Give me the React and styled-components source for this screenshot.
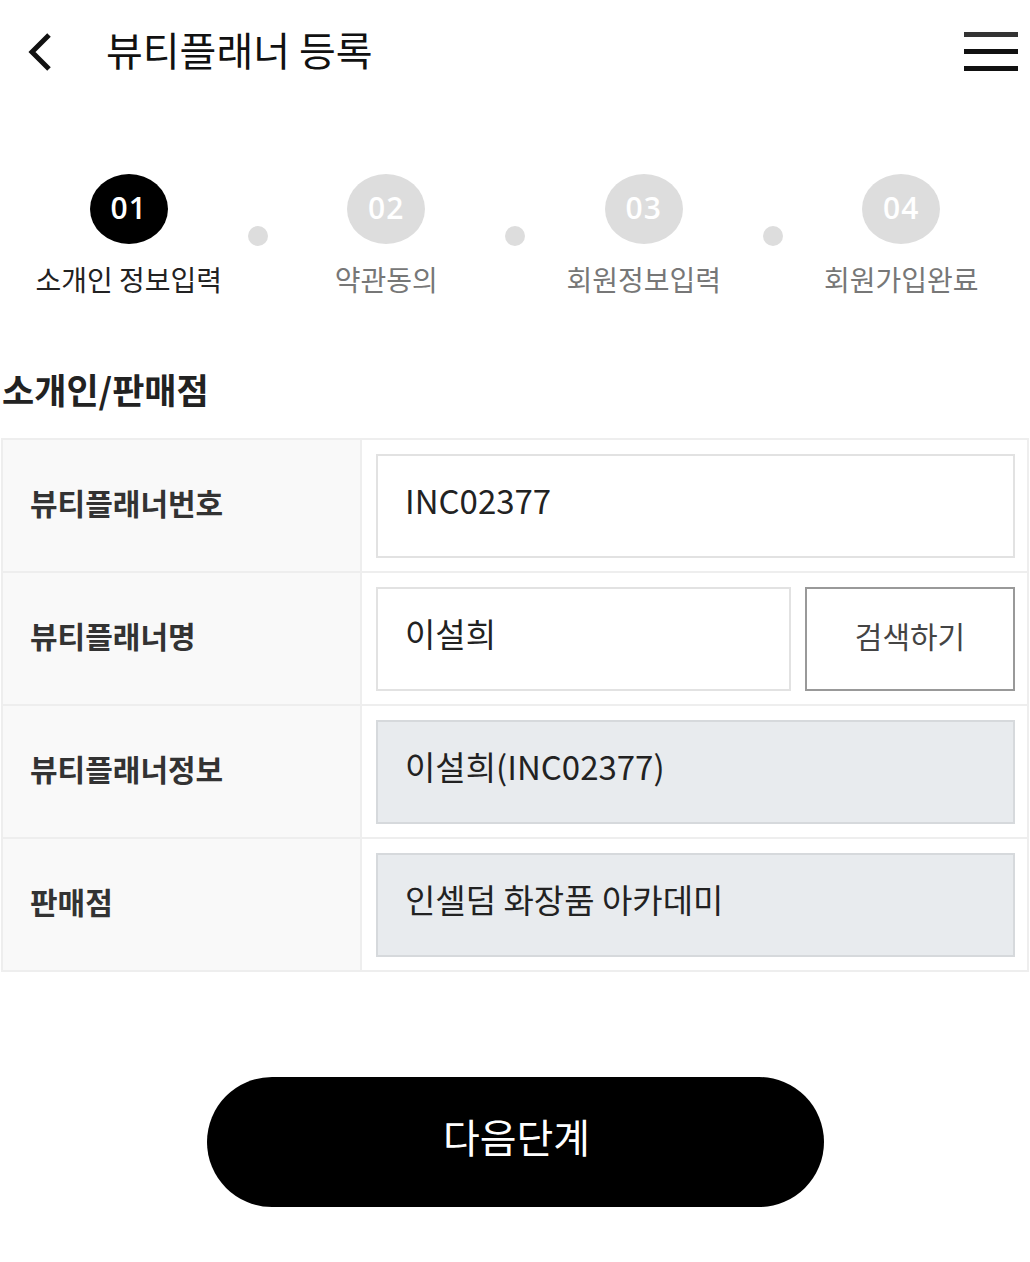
import React from 'react';
import styled, { createGlobalStyle } from 'styled-components';

const GlobalStyle = createGlobalStyle`
  html, body {
    margin: 0;
    padding: 0;
    background: #fff;
  }
  body {
    font-family: "Noto Sans CJK KR", "Noto Sans", sans-serif;
    color: #111;
  }
  * {
    box-sizing: border-box;
  }
`;

const Page = styled.div`
  width: 1030px;
  min-height: 1262px;
  background: #fff;
`;

const Header = styled.header`
  height: 104px;
  display: flex;
  align-items: center;
  padding: 0 12px 0 24px;
`;

const BackButton = styled.button`
  width: 34px;
  height: 44px;
  padding: 0;
  border: 0;
  background: none;
  display: flex;
  align-items: center;
  justify-content: center;
`;

const Title = styled.h1`
  flex: 1;
  margin: 0 0 0 48px;
  font-size: 40px;
  font-weight: 400;
  line-height: 1;
  color: #111;
  padding-bottom: 6px;
`;

const MenuButton = styled.button`
  width: 54px;
  height: 44px;
  padding: 0;
  border: 0;
  background: none;
  display: flex;
  flex-direction: column;
  justify-content: center;
  gap: 12px;
  margin-bottom: 2px;
`;

const MenuLine = styled.span`
  display: block;
  height: 5px;
  width: 100%;
  background: ${props => (props.$light ? '#333' : '#111')};
`;

const Stepper = styled.ol`
  list-style: none;
  margin: 70px 0 0;
  padding: 0;
  display: grid;
  grid-template-columns: repeat(4, 1fr);
`;

const Step = styled.li`
  position: relative;
  display: flex;
  flex-direction: column;
  align-items: center;

  &:not(:last-child)::after {
    content: '';
    position: absolute;
    right: -10px;
    top: 52px;
    width: 20px;
    height: 20px;
    border-radius: 50%;
    background: #ddd;
  }
`;

const StepNumber = styled.div`
  width: 78px;
  height: 70px;
  border-radius: 50%;
  background: ${props => (props.$active ? '#000' : '#ddd')};
  color: #fff;
  display: flex;
  align-items: center;
  justify-content: center;
  padding-bottom: 4px;
  font-family: "Open Sans", "Noto Sans", sans-serif;
  font-weight: 600;
  font-size: 30px;
  letter-spacing: 1px;
`;

const StepLabel = styled.span`
  margin-top: 16px;
  font-size: 28px;
  line-height: 38px;
  color: ${props => (props.$active ? '#222' : '#777')};
`;

const SectionTitle = styled.h2`
  margin: 70px 0 0 2px;
  font-size: 35px;
  line-height: 42px;
  font-weight: 700;
  color: #222;
`;

const FormTable = styled.div`
  margin: 28px 1px 0;
  border: 2px solid #eee;
  border-bottom: 0;
`;

const FormRow = styled.div`
  display: grid;
  grid-template-columns: 359px 1fr;
  border-bottom: 2px solid #eee;
  height: 133px;
`;

const FieldLabel = styled.div`
  background: #f9f9f9;
  border-right: 2px solid #eee;
  display: flex;
  align-items: center;
  padding: 0 0 8px 27px;
  font-size: 30px;
  font-weight: 700;
  color: #333;
`;

const FieldCell = styled.div`
  display: flex;
  align-items: center;
  gap: 14px;
  padding: 0 12px 0 14px;
`;

const Input = styled.input`
  flex: 1;
  min-width: 0;
  height: 104px;
  border: 2px solid ${props => (props.readOnly ? '#d6d9dc' : '#e2e2e2')};
  background: ${props => (props.readOnly ? '#e8ebee' : '#fff')};
  padding: 0 0 12px 27px;
  font-family: "Noto Sans CJK KR", "Noto Sans", sans-serif;
  font-size: 33px;
  color: #222;
  outline: none;
`;

const SearchButton = styled.button`
  width: 210px;
  height: 104px;
  flex-shrink: 0;
  border: 2px solid #999;
  background: #fff;
  font-family: "Noto Sans CJK KR", "Noto Sans", sans-serif;
  font-size: 30px;
  color: #444;
  padding: 0 0 8px 0;
`;

const Footer = styled.div`
  display: flex;
  justify-content: center;
  margin-top: 105px;
  padding-left: 1px;
`;

const NextButton = styled.button`
  width: 617px;
  height: 130px;
  border: 0;
  border-radius: 65px;
  background: #000;
  color: #fff;
  font-family: "Noto Sans CJK KR", "Noto Sans", sans-serif;
  font-size: 40px;
  padding: 0 0 12px 2px;
`;

const steps = [
  { num: '01', label: '소개인 정보입력', active: true },
  { num: '02', label: '약관동의' },
  { num: '03', label: '회원정보입력' },
  { num: '04', label: '회원가입완료' },
];

const ChevronLeft = () => (
  <svg width="26" height="40" viewBox="0 0 26 40">
    <path d="M21 3 L4 20 L21 37" fill="none" stroke="#111" strokeWidth="5" />
  </svg>
);

const App = () => {
  return (
    <Page>
      <GlobalStyle />
      <Header>
        <BackButton aria-label="뒤로">
          <ChevronLeft />
        </BackButton>
        <Title>뷰티플래너 등록</Title>
        <MenuButton aria-label="메뉴">
          <MenuLine $light />
          <MenuLine />
          <MenuLine />
        </MenuButton>
      </Header>

      <Stepper>
        {steps.map(step => (
          <Step key={step.num}>
            <StepNumber $active={step.active}>{step.num}</StepNumber>
            <StepLabel $active={step.active}>{step.label}</StepLabel>
          </Step>
        ))}
      </Stepper>

      <SectionTitle>소개인/판매점</SectionTitle>
      <FormTable>
        <FormRow>
          <FieldLabel>뷰티플래너번호</FieldLabel>
          <FieldCell>
            <Input defaultValue="INC02377" />
          </FieldCell>
        </FormRow>
        <FormRow>
          <FieldLabel>뷰티플래너명</FieldLabel>
          <FieldCell>
            <Input defaultValue="이설희" />
            <SearchButton>검색하기</SearchButton>
          </FieldCell>
        </FormRow>
        <FormRow>
          <FieldLabel>뷰티플래너정보</FieldLabel>
          <FieldCell>
            <Input readOnly value="이설희(INC02377)" />
          </FieldCell>
        </FormRow>
        <FormRow>
          <FieldLabel>판매점</FieldLabel>
          <FieldCell>
            <Input readOnly value="인셀덤 화장품 아카데미" />
          </FieldCell>
        </FormRow>
      </FormTable>

      <Footer>
        <NextButton>다음단계</NextButton>
      </Footer>
    </Page>
  );
};

export default App;
